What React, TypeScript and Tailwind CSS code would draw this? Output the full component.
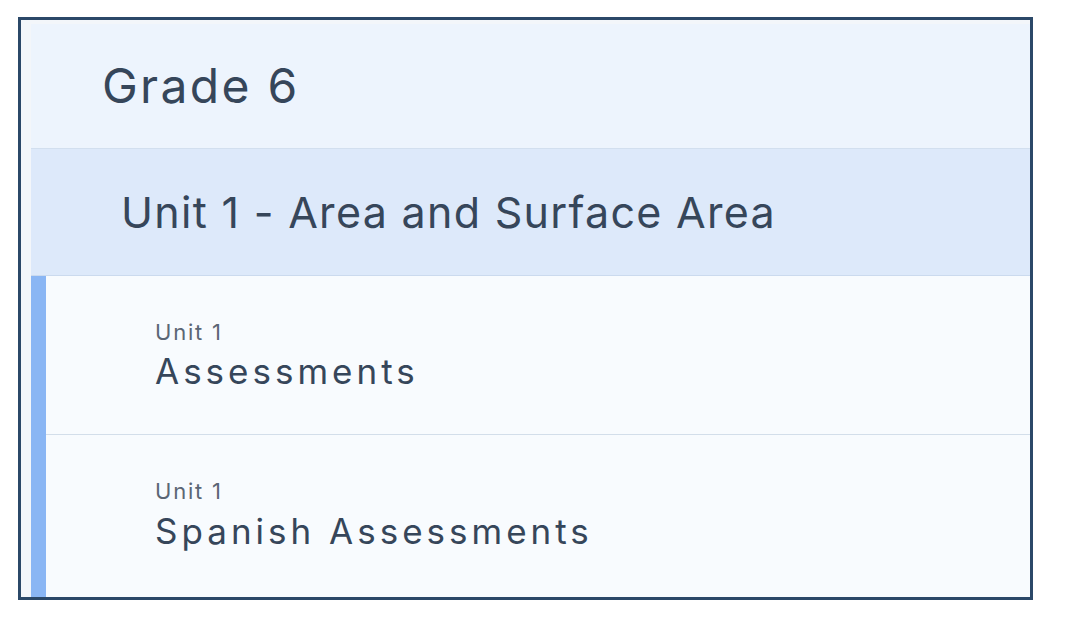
import React from 'react';

interface Item {
  unit: string;
  title: string;
}

const items: Item[] = [
  { unit: 'Unit 1', title: 'Assessments' },
  { unit: 'Unit 1', title: 'Spanish Assessments' },
];

export default function App() {
  return (
    <div className="min-h-screen w-full bg-white pt-[17px] pl-[18px]" style={{ fontFamily: 'Inter, "Open Sans", sans-serif' }}>
      <div className="w-[1015px] h-[583px] border-[3px] border-[#2b4868] bg-[#f3f6fa] pt-[4px] pl-[10px] overflow-hidden">
        <div className="h-[125px] bg-[#edf4fd] border-b border-[#d2dfef] flex items-center pl-[71px]">
          <h1 className="text-[48px] text-[#36465a] tracking-[2.3px]">Grade 6</h1>
        </div>

        <div className="h-[127px] bg-[#dde9fa] border-b border-[#cbdaee] flex items-center pl-[90px]">
          <h2 className="text-[43px] text-[#36465a] tracking-[1.3px]">Unit 1 - Area and Surface Area</h2>
        </div>

        {items.map((it, i) => {
          const last = i === items.length - 1;
          return (
            <div key={i} className={last ? 'flex h-[165px] bg-[#f8fbfe]' : 'flex h-[159px] bg-[#f8fbfe]'}>
              <div className="w-[15px] bg-[#8ab6f4]" />
              <div
                className={
                  last
                    ? 'flex-1 flex flex-col justify-center pl-[109px] pt-[3px] pb-[6px]'
                    : 'flex-1 flex flex-col justify-center pl-[109px] pt-[3px] border-b border-[#d3deea]'
                }
              >
                <div className="text-[22px] text-[#5b6675] leading-tight tracking-[1.8px]">{it.unit}</div>
                <div className="mt-[4px] text-[35px] text-[#36465a] leading-tight tracking-[4px]">{it.title}</div>
              </div>
            </div>
          );
        })}
      </div>
    </div>
  );
}
